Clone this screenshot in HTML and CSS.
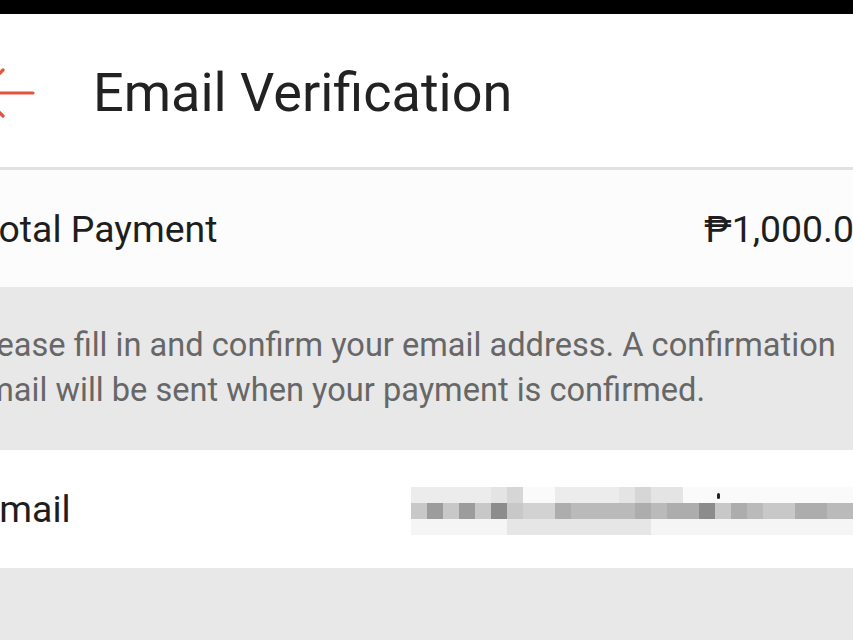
FILE: index.html
```html
<!DOCTYPE html>
<html lang="en">
<head>
<meta charset="utf-8">
<title>Email Verification</title>
<link rel="stylesheet" href="styles.css">
</head>
<body>
<div class="statusbar"></div>
<div class="screen">
  <header class="appbar">
    <svg class="back" width="60" height="52" viewBox="0 0 60 52" aria-hidden="true">
      <path d="M2 26 H55 M2 26 L25 3 M2 26 L25 49" fill="none" stroke="#e2553a" stroke-width="3.2" stroke-linecap="round"/>
    </svg>
    <h1 class="title">Email Verification</h1>
  </header>
  <section class="row row-total">
    <span class="label">Total Payment</span>
    <span class="value">₱1,000.00</span>
  </section>
  <section class="note">
    <p>Please fill in and confirm your email address. A confirmation email will be sent when your payment is confirmed.</p>
  </section>
  <section class="row row-email">
    <span class="label">Email</span>
    <div class="blur" aria-hidden="true">
      <div class="band band-top">
        <i class="s1"></i><i class="s1"></i><i class="s1"></i><i class="s1"></i><i class="s1"></i><i class="s2"></i><i class="s3"></i><i class="s0"></i><i class="s0"></i><i class="s1"></i><i class="s1"></i><i class="s1"></i><i class="s1"></i><i class="s2"></i><i class="s3"></i><i class="s2"></i><i class="s2"></i><i class="s0"></i><i class="s0"></i><i class="s0"></i><i class="s0"></i><i class="s0"></i><i class="s0"></i><i class="s0"></i><i class="s0"></i><i class="s0"></i><i class="s0"></i><i class="s0"></i>
      </div>
      <div class="band band-mid">
        <i class="m1"></i><i class="m4"></i><i class="m1"></i><i class="m4"></i><i class="m1"></i><i class="m5"></i><i class="m1"></i><i class="m0"></i><i class="m0"></i><i class="m3"></i><i class="m2"></i><i class="m2"></i><i class="m2"></i><i class="m2"></i><i class="m3"></i><i class="m2"></i><i class="m3"></i><i class="m3"></i><i class="m5"></i><i class="m1"></i><i class="m3"></i><i class="m2"></i><i class="m1"></i><i class="m1"></i><i class="m3"></i><i class="m3"></i><i class="m2"></i><i class="m2"></i>
      </div>
      <div class="band band-bot">
        <i class="b0"></i><i class="b0"></i><i class="b0"></i><i class="b0"></i><i class="b0"></i><i class="b0"></i><i class="b1"></i><i class="b1"></i><i class="b1"></i><i class="b1"></i><i class="b1"></i><i class="b1"></i><i class="b1"></i><i class="b1"></i><i class="b1"></i><i class="b0"></i><i class="b0"></i><i class="b0"></i><i class="b0"></i><i class="b0"></i><i class="b0"></i><i class="b0"></i><i class="b0"></i><i class="b0"></i><i class="b0"></i><i class="b0"></i><i class="b0"></i><i class="b0"></i>
      </div>
      <span class="dot"></span>
    </div>
  </section>
  <div class="filler"></div>
</div>
</body>
</html>
```
FILE: styles.css
```css
html, body {
  margin: 0;
  padding: 0;
  background: #e8e8e8;
  overflow: hidden;
  height: 640px;
}
body {
  font-family: Roboto, "Noto Sans", "Liberation Sans", sans-serif;
}
.statusbar {
  height: 14px;
  background: #000;
}
.screen {
  margin-left: -46px;
  width: 945px;
  display: flex;
  flex-direction: column;
}
.appbar {
  height: 155px;
  box-sizing: border-box;
  padding-top: 4px;
  background: #fff;
  display: flex;
  align-items: center;
  border-bottom: 2px solid #e2e2e2;
  box-shadow: 0 1px 2px rgba(0,0,0,0.05);
}
.back {
  margin-left: 24px;
  flex: none;
}
.title {
  margin: 0 0 0 55px;
  font-size: 54px;
  font-weight: 400;
  color: #222;
  letter-spacing: 0;
}
.row {
  display: flex;
  align-items: center;
  justify-content: space-between;
  padding: 0 24px;
}
.row-total {
  margin-top: 1px;
  height: 117px;
  background: #fcfcfc;
}
.row-email {
  height: 118px;
  background: #fff;
  position: relative;
}
.label {
  font-size: 37.4px;
  color: #1e1e1e;
}
.value {
  font-size: 37.4px;
  color: #1e1e1e;
}
.note {
  background: #e8e8e8;
  padding: 36px 24px 37px 14px;
}
.note p {
  margin: 0;
  font-size: 32.6px;
  line-height: 45px;
  color: #676767;
}
.blur {
  position: absolute;
  left: 457px;
  top: 37px;
  display: flex;
  flex-direction: column;
}
.band {
  display: flex;
  height: 16px;
}
.band i {
  display: block;
  width: 16px;
  height: 16px;
  flex: none;
}
.dot {
  position: absolute;
  left: 306px;
  top: 6px;
  width: 3px;
  height: 6px;
  border-radius: 2px;
  background: #222;
}
.s0 { background: #fafafa; }
.s1 { background: #ececec; }
.s2 { background: #e4e4e4; }
.s3 { background: #d6d6d6; }
.m0 { background: #d2d2d2; }
.m1 { background: #c8c8c8; }
.m2 { background: #bababa; }
.m3 { background: #adadad; }
.m4 { background: #9c9c9c; }
.m5 { background: #8c8c8c; }
.b0 { background: #f5f5f5; }
.b1 { background: #e6e6e6; }
.filler {
  height: 80px;
  background: #e8e8e8;
}
```
